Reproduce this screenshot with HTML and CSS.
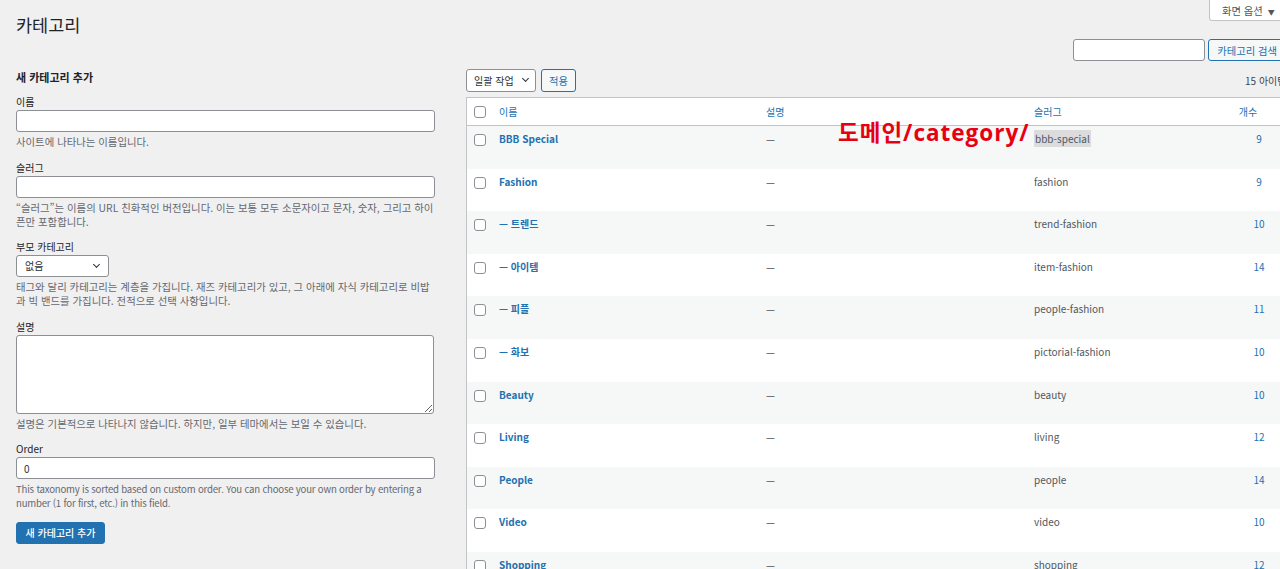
FILE: index.html
```html
<!DOCTYPE html>
<html lang="ko">
  <head>
    <meta charset="UTF-8">
    <meta name="viewport" content="width=device-width, initial-scale=1.0">
    <title>카테고리</title>
    <link rel="stylesheet" href="styles.css">
  </head>
  <body>
    <div class="wrap">
      <div class="top">
        <h1>카테고리</h1>
        <button class="screen-options">화면 옵션 <span class="arrow">▼</span></button>
      </div>
      <div class="search-row">
        <input type="search" class="search-input">
        <button class="btn">카테고리 검색</button>
      </div>
      <div class="columns">
        <div class="col-left">
          <h2>새 카테고리 추가</h2>
          <div class="field">
            <label>이름</label>
            <input type="text" class="text-input">
            <p class="description">사이트에 나타나는 이름입니다.</p>
          </div>
          <div class="field">
            <label>슬러그</label>
            <input type="text" class="text-input">
            <p class="description">“슬러그”는 이름의 URL 친화적인 버전입니다. 이는 보통 모두 소문자이고 문자, 숫자, 그리고 하이픈만 포함합니다.</p>
          </div>
          <div class="field">
            <label>부모 카테고리</label>
            <div class="select parent-select">없음 <span class="chevron"></span></div>
            <p class="description">태그와 달리 카테고리는 계층을 가집니다. 재즈 카테고리가 있고, 그 아래에 자식 카테고리로 비밥과 빅 밴드를 가집니다. 전적으로 선택 사항입니다.</p>
          </div>
          <div class="field">
            <label>설명</label>
            <textarea class="text-area"></textarea>
            <p class="description">설명은 기본적으로 나타나지 않습니다. 하지만, 일부 테마에서는 보일 수 있습니다.</p>
          </div>
          <div class="field">
            <label>Order</label>
            <input type="text" class="text-input" value="0">
            <p class="description en">This taxonomy is sorted based on custom order. You can choose your own order by entering a number (1 for first, etc.) in this field.</p>
          </div>
          <button class="btn-primary">새 카테고리 추가</button>
        </div>

        <div class="col-right">
          <div class="tablenav">
            <div class="select bulk-select">일괄 작업 <span class="chevron"></span></div>
            <button class="btn apply">적용</button>
            <span class="items-count">15 아이템</span>
          </div>
          <div class="table">
            <div class="note">도메인/category/</div>
            <div class="row head">
              <span class="cb"><input type="checkbox"></span>
              <a class="col">이름</a>
              <a class="col">설명</a>
              <a class="col">슬러그</a>
              <a class="col count">개수</a>
            </div>
            <div class="row alt">
              <span class="cb"><input type="checkbox"></span>
              <a class="col name">BBB Special</a>
              <span class="col desc">—</span>
              <span class="col slug"><span class="selected">bbb-special</span></span>
              <a class="col count">9</a>
            </div>
            <div class="row">
              <span class="cb"><input type="checkbox"></span>
              <a class="col name">Fashion</a>
              <span class="col desc">—</span>
              <span class="col slug">fashion</span>
              <a class="col count">9</a>
            </div>
            <div class="row alt">
              <span class="cb"><input type="checkbox"></span>
              <a class="col name">— 트렌드</a>
              <span class="col desc">—</span>
              <span class="col slug">trend-fashion</span>
              <a class="col count">10</a>
            </div>
            <div class="row">
              <span class="cb"><input type="checkbox"></span>
              <a class="col name">— 아이템</a>
              <span class="col desc">—</span>
              <span class="col slug">item-fashion</span>
              <a class="col count">14</a>
            </div>
            <div class="row alt">
              <span class="cb"><input type="checkbox"></span>
              <a class="col name">— 피플</a>
              <span class="col desc">—</span>
              <span class="col slug">people-fashion</span>
              <a class="col count">11</a>
            </div>
            <div class="row">
              <span class="cb"><input type="checkbox"></span>
              <a class="col name">— 화보</a>
              <span class="col desc">—</span>
              <span class="col slug">pictorial-fashion</span>
              <a class="col count">10</a>
            </div>
            <div class="row alt">
              <span class="cb"><input type="checkbox"></span>
              <a class="col name">Beauty</a>
              <span class="col desc">—</span>
              <span class="col slug">beauty</span>
              <a class="col count">10</a>
            </div>
            <div class="row">
              <span class="cb"><input type="checkbox"></span>
              <a class="col name">Living</a>
              <span class="col desc">—</span>
              <span class="col slug">living</span>
              <a class="col count">12</a>
            </div>
            <div class="row alt">
              <span class="cb"><input type="checkbox"></span>
              <a class="col name">People</a>
              <span class="col desc">—</span>
              <span class="col slug">people</span>
              <a class="col count">14</a>
            </div>
            <div class="row">
              <span class="cb"><input type="checkbox"></span>
              <a class="col name">Video</a>
              <span class="col desc">—</span>
              <span class="col slug">video</span>
              <a class="col count">10</a>
            </div>
            <div class="row alt">
              <span class="cb"><input type="checkbox"></span>
              <a class="col name">Shopping</a>
              <span class="col desc">—</span>
              <span class="col slug">shopping</span>
              <a class="col count">12</a>
            </div>
          </div>
        </div>
      </div>
    </div>
  </body>
</html>
```

FILE: styles.css
```css
html, body{
  margin: 0;
  height: 569px;
  overflow: hidden;
}
body{
  background-color: #f0f0f1;
  color: #3c434a;
  font-family: "Noto Sans CJK KR", sans-serif;
  font-size: 10px;
  line-height: 14px;
}
.wrap{
  width: 1290px;
  padding-left: 16px;
  box-sizing: border-box;
}
.top{
  display: flex;
  justify-content: space-between;
  align-items: flex-start;
  height: 37px;
}
h1{
  margin: 13px 0 0 0;
  font-size: 17.5px;
  font-weight: 400;
  line-height: 24px;
  color: #1d2327;
}
.screen-options{
  margin-right: 6px;
  width: 75px;
  height: 21px;
  padding: 0 0 0 12px;
  text-align: left;
  background-color: #fff;
  border: 1px solid #c3c4c7;
  border-top: none;
  border-radius: 0 0 0 3px;
  font-family: inherit;
  font-size: 10.3px;
  color: #50575e;
}
.arrow{
  font-size: 7px;
  margin-left: 2px;
}
.search-row{
  display: flex;
  justify-content: flex-end;
  gap: 3px;
  margin-top: 2px;
  margin-right: 4px;
}
.search-input{
  width: 132px;
  height: 22px;
  box-sizing: border-box;
  border: 1px solid #8c8f94;
  border-radius: 3px;
  background-color: #fff;
}
.btn{
  height: 22px;
  box-sizing: border-box;
  padding: 0 8px;
  border: 1px solid #2271b1;
  border-radius: 3px;
  background-color: #f6f7f7;
  color: #2271b1;
  font-family: inherit;
  font-size: 10.3px;
}
.columns{
  display: flex;
  gap: 31px;
}
.col-left{
  width: 419px;
  padding-top: 8px;
}
.col-right{
  flex: 1;
  padding-top: 8px;
}
h2{
  margin: 0 0 10px 0;
  font-size: 11px;
  font-weight: 700;
  line-height: 16px;
  color: #1d2327;
}
.field{
  margin-bottom: 11.5px;
}
label{
  display: block;
  line-height: 14px;
  margin-bottom: 1px;
  color: #1d2327;
}
.text-input{
  display: block;
  width: 100%;
  height: 22px;
  box-sizing: border-box;
  border: 1px solid #8c8f94;
  border-radius: 3px;
  padding: 0 7px;
  font-family: inherit;
  font-size: 10px;
  color: #2c3338;
}
.text-area{
  display: block;
  width: 418px;
  height: 79px;
  box-sizing: border-box;
  border: 1px solid #8c8f94;
  border-radius: 3px;
  margin-bottom: 2px;
}
.description{
  margin: 3px 0 0 0;
  color: #646970;
  font-size: 10.4px;
  line-height: 14px;
}
.description.en{
  font-size: 9.6px;
  letter-spacing: -0.2px;
}
.select{
  position: relative;
  height: 22px;
  box-sizing: border-box;
  border: 1px solid #8c8f94;
  border-radius: 3px;
  background-color: #fff;
  line-height: 20px;
  color: #2c3338;
}
.chevron{
  position: absolute;
  top: 6px;
  width: 4px;
  height: 4px;
  border-right: 1.3px solid #2c3338;
  border-bottom: 1.3px solid #2c3338;
  transform: rotate(45deg);
}
.parent-select{
  width: 93px;
  padding-left: 8px;
}
.parent-select .chevron{
  right: 9px;
}
.btn-primary{
  display: block;
  margin-top: 9px;
  width: 89px;
  height: 22px;
  padding: 0;
  border: 1px solid #2271b1;
  border-radius: 3px;
  background-color: #2271b1;
  color: #fff;
  font-family: inherit;
  font-size: 10px;
  font-weight: 500;
}
.tablenav{
  display: flex;
  align-items: center;
  height: 23px;
  margin-bottom: 5px;
}
.bulk-select{
  width: 70px;
  height: 23px;
  padding-left: 7px;
  line-height: 21px;
}
.bulk-select .chevron{
  right: 7px;
}
.apply{
  height: 23px;
  margin-left: 5px;
  width: 35px;
  padding: 0;
}
.items-count{
  margin-left: auto;
  color: #3c434a;
  width: 45px;
}
.table{
  position: relative;
  background-color: #fff;
  border-top: 1px solid #c3c4c7;
  border-left: 1px solid #c3c4c7;
}
.row{
  display: grid;
  grid-template-columns: 28px 267px 268px 199px 60px;
  height: 42.6px;
}
.row.alt{
  background-color: #f6f7f7;
}
.row.head{
  height: 27px;
  align-items: center;
  border-bottom: 1px solid #c3c4c7;
  background-color: #fff;
}
.cb{
  padding: 8px 0 0 7px;
  line-height: 0;
}
.head .cb{
  padding-top: 1px;
}
input[type="checkbox"]{
  appearance: none;
  margin: 0;
  width: 12px;
  height: 12px;
  border: 1px solid #8c8f94;
  border-radius: 3px;
  background-color: #fff;
}
.col{
  padding: 5px 0 0 4px;
  line-height: 15px;
}
.head .col{
  padding-top: 0;
  color: #2271b1;
}
.name{
  color: #2271b1;
  font-weight: 700;
}
.desc{
  color: #50575e;
}
.slug{
  color: #50575e;
}
.selected{
  background-color: #dcdcde;
  padding: 1px 1px;
}
.count{
  padding-left: 0;
  text-align: center;
  color: #2271b1;
}
.head .count{
  padding-right: 22px;
}
.note{
  position: absolute;
  left: 371px;
  top: 20px;
  z-index: 2;
  color: #e60012;
  font-family: "Open Sans", "Noto Sans CJK KR", sans-serif;
  font-size: 22.5px;
  font-weight: 700;
  line-height: 30px;
  letter-spacing: 1px;
}
```
